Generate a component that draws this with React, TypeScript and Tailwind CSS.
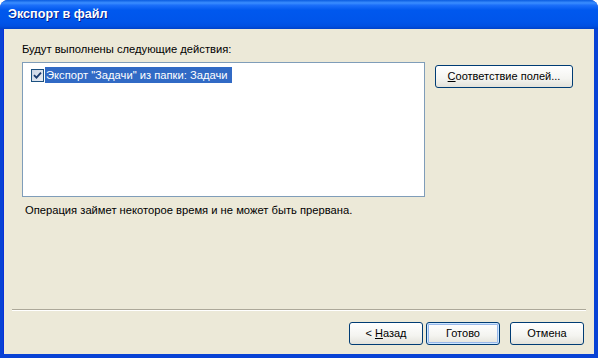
import React from "react";

const font = { fontFamily: '"Liberation Sans", Arial, sans-serif' };

function XPButton({ children, def, w = "w-[74px]" }: { children: React.ReactNode; def?: boolean; w?: string }) {
  return (
    <div
      className={`${w} h-[23px] rounded-[3px] border border-[#003C74] bg-[linear-gradient(to_bottom,#FFFFFF_0%,#F4F4F0_60%,#E3E2DA_100%)] flex items-center justify-center text-[11px] text-black ${
        def ? "shadow-[inset_0_0_0_1px_#CEE7FF,inset_0_0_0_2px_#98B8EA]" : ""
      }`}
    >
      {children}
    </div>
  );
}

export default function App() {
  return (
    <div className="w-[598px] h-[358px] bg-white" style={font}>
      <div className="w-[598px] h-[358px] flex flex-col rounded-t-[8px] overflow-hidden bg-[#0842D5]">
        <div className="h-[29px] shrink-0 flex items-center pl-[8px] bg-[linear-gradient(to_bottom,#0A5CE0_0%,#3B8EFF_10%,#1C6FF9_18%,#0058EE_35%,#0055EA_75%,#0050E2_90%,#0042C9_100%)]">
          <span className="text-white font-bold text-[12.6px] [text-shadow:1px_1px_0_#0A1E8C]">Экспорт в файл</span>
        </div>
        <div className="flex-1 ml-[3px] mr-[4px] mb-[4px] bg-[#ECE9D8] flex flex-col border-l border-[#0831D9]">
          <div className="flex flex-col pl-[18px] pt-[13px] text-[11.2px] text-black">
            <div className="leading-[14px]">Будут выполнены следующие действия:</div>
            <div className="flex mt-[6px]">
              <div className="w-[403px] h-[135px] bg-white border border-[#7F9DB9] pl-[8px] pt-[4px]">
                <div className="flex items-center h-[16px]">
                  <div className="w-[13px] h-[13px] border border-[#1C5180] bg-[linear-gradient(135deg,#C9D3E4,#E8ECF3)] flex items-center justify-center">
                    <svg width="9" height="9" viewBox="0 0 9 9">
                      <path d="M1 4.2 L3.5 6.7 L8 1.7" stroke="#1A3A6E" strokeWidth="1.8" fill="none" />
                    </svg>
                  </div>
                  <div className="ml-[1px] h-[16px] bg-[#316AC5] text-white flex items-center pl-[1px] pr-[4px]">
                    Экспорт "Задачи" из папки: Задачи
                  </div>
                </div>
              </div>
              <div className="ml-[10px] mt-[3px]">
                <XPButton w="w-[138px]">
                  <span>
                    <u>С</u>оответствие полей...
                  </span>
                </XPButton>
              </div>
            </div>
            <div className="mt-[6px] pl-[3px] leading-[14px]">Операция займет некоторое время и не может быть прервана.</div>
          </div>
          <div className="flex-1" />
          <div className="mx-[8px] h-[2px] border-t border-[#ACA899] border-b border-b-white" />
          <div className="flex justify-end pr-[10px] pt-[11px] pb-[9px]">
            <XPButton>
              <span>
                &lt; <u>Н</u>азад
              </span>
            </XPButton>
            <div className="w-[3px]" />
            <XPButton def>Готово</XPButton>
            <div className="w-[10px]" />
            <XPButton>Отмена</XPButton>
          </div>
        </div>
      </div>
    </div>
  );
}
